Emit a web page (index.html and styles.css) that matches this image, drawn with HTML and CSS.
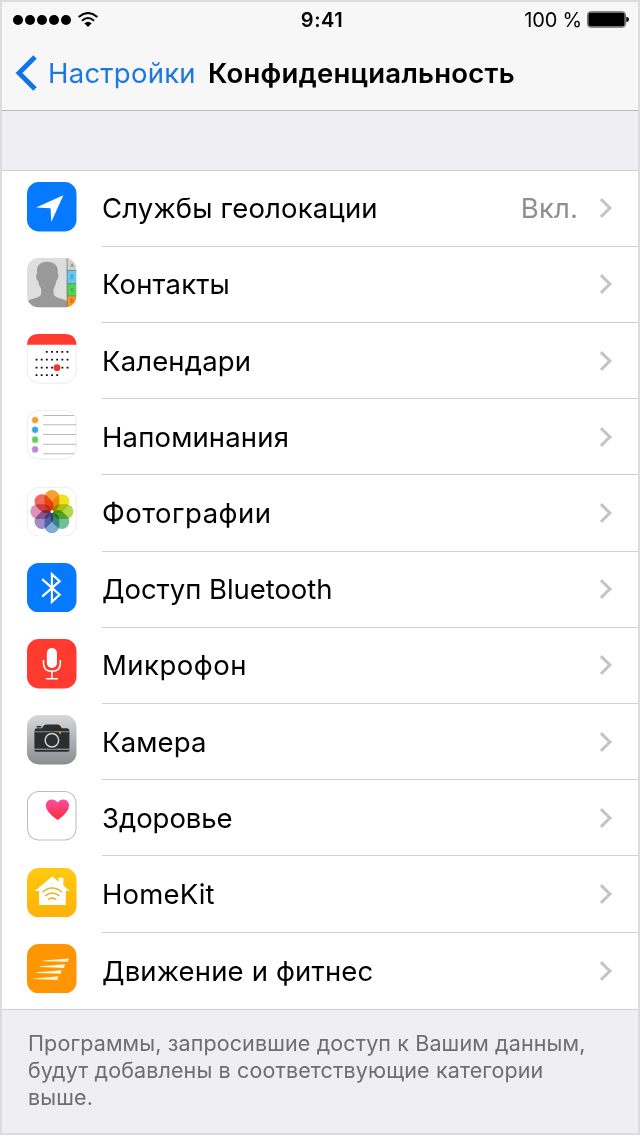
FILE: index.html
```html
<!DOCTYPE html>
<html lang="ru">
<head>
    <meta charset="UTF-8">
    <meta name="viewport" content="width=device-width, initial-scale=1.0">
    <title>Конфиденциальность</title>
    <link rel="stylesheet" href="styles.css">
</head>
<body>
    <div class="screen">
        <header class="header">
            <div class="status-bar">
                <div class="signal">
                    <i></i><i></i><i></i><i></i><i></i>
                    <svg class="wifi" viewBox="0 0 60 45">
                        <path d="M2 15Q30-9 58 15M12 26Q30 10 48 26" fill="none" stroke="#000" stroke-width="6"/>
                        <path d="M19 34Q30 25 41 34L30 45z"/>
                    </svg>
                </div>
                <div class="time">9:41</div>
                <div class="battery">
                    <span class="percent">100 %</span>
                    <svg viewBox="0 0 126 50">
                        <rect x="1.5" y="1.5" width="114" height="47" rx="9" fill="#fff" stroke="#555" stroke-width="2.5"/>
                        <rect x="4" y="4" width="109" height="42" rx="6"/>
                        <path d="M118 17q8 1 8 8t-8 8z"/>
                    </svg>
                </div>
            </div>
            <nav class="nav">
                <a class="back">
                    <svg viewBox="0 0 22 36"><path d="M20 2L4 18l16 16" fill="none" stroke="#0f74e8" stroke-width="4.8"/></svg>
                    <span>Настройки</span>
                </a>
                <h1>Конфиденциальность</h1>
            </nav>
        </header>

        <ul class="list">
            <li class="row">
                <svg class="icon" viewBox="0 0 147 147">
                    <rect width="147" height="147" rx="35" fill="#057aff"/>
                    <path d="M108 39L27 76l43 2 2 41z" fill="#fff"/>
                </svg>
                <div class="cell"><span>Службы геолокации</span><span class="value">Вкл.</span><i class="arrow"></i></div>
            </li>
            <li class="row">
                <svg class="icon" viewBox="0 0 147 147">
                    <defs><clipPath id="round"><rect width="147" height="147" rx="35"/></clipPath></defs>
                    <g clip-path="url(#round)">
                        <rect width="147" height="147" fill="#dedede"/>
                        <path d="M0 147v-18q4-5 18-8 22-5 24-13V91q-7-8-9-23-5-2-6-14 0-6 3-7Q25 12 60 11q35 1 31 36 3 1 2 8-1 11-6 13-2 15-8 23v17q2 8 23 13 13 3 17 8v18z" fill="#999"/>
                        <rect x="119" width="28" height="36" fill="#d3d1cc"/>
                        <rect x="119" y="37" width="28" height="39" fill="#63c8f5"/>
                        <rect x="119" y="77" width="28" height="36" fill="#51d44f"/>
                        <rect x="119" y="114" width="28" height="33" fill="#ff9212"/>
                        <path d="M119 0v147M119 37h28M119 76h28M119 113h28" stroke="#666" stroke-width="2"/>
                        <g fill="none" stroke="#555" stroke-opacity=".55" stroke-width="2.5">
                            <path d="M130 27l4-10 4 10m-6-3h5M131 51v10h4q4-3 0-5 3-3 0-5zM138 91q-7-3-7 3t7 3M131 122v10q7-1 7-5t-7-5"/>
                        </g>
                    </g>
                </svg>
                <div class="cell"><span>Контакты</span><i class="arrow"></i></div>
            </li>
            <li class="row">
                <svg class="icon" viewBox="0 0 147 147">
                    <rect x="1" y="1" width="145" height="145" rx="34" fill="#fff" stroke="#e2e2e2" stroke-width="2"/>
                    <path d="M0 32Q2 0 35 0h77q33 0 35 32z" fill="#ff3b30"/>
                    <g stroke="#111" stroke-width="5.5" stroke-dasharray="5.5 9.85">
                        <path d="M56 53h67M25.500 76h98M25.500 100h98M25.500 122h67"/>
                    </g>
                    <circle cx="89" cy="100" r="10" fill="#f0372d"/>
                </svg>
                <div class="cell"><span>Календари</span><i class="arrow"></i></div>
            </li>
            <li class="row">
                <svg class="icon" viewBox="0 0 147 147">
                    <rect x="1" y="1" width="145" height="145" rx="34" fill="#fff" stroke="#e2e2e2" stroke-width="2"/>
                    <path d="M48 16h92M48 44h98M48 73h98M48 102h98M48 130h92" stroke="#b9b9bb" stroke-width="3"/>
                    <g stroke-width="3" stroke-opacity=".6">
                        <circle cx="24" cy="30" r="9" fill="#f0a033" stroke="#f3b45c"/>
                        <circle cx="24" cy="59" r="9" fill="#38a3e3" stroke="#6dbfee"/>
                        <circle cx="24" cy="88" r="9" fill="#69cf58" stroke="#8adc7d"/>
                        <circle cx="24" cy="117" r="9" fill="#bf86d6" stroke="#d0a6e1"/>
                    </g>
                </svg>
                <div class="cell"><span>Напоминания</span><i class="arrow"></i></div>
            </li>
            <li class="row">
                <svg class="icon" viewBox="0 0 147 147">
                    <rect x="1" y="1" width="145" height="145" rx="34" fill="#fff" stroke="#e2e2e2" stroke-width="2"/>
                    <g class="petals" transform="translate(74 73)">
                        <rect x="-22" y="-64" width="44" height="62" rx="22" fill="#f9a033"/>
                        <rect x="-22" y="-64" width="44" height="62" rx="22" fill="#eee31c" transform="rotate(45)"/>
                        <rect x="-22" y="-64" width="44" height="62" rx="22" fill="#b8d64a" transform="rotate(90)"/>
                        <rect x="-22" y="-64" width="44" height="62" rx="22" fill="#70c196" transform="rotate(135)"/>
                        <rect x="-22" y="-64" width="44" height="62" rx="22" fill="#7fadd8" transform="rotate(180)"/>
                        <rect x="-22" y="-64" width="44" height="62" rx="22" fill="#9e8ec5" transform="rotate(225)"/>
                        <rect x="-22" y="-64" width="44" height="62" rx="22" fill="#d994b8" transform="rotate(270)"/>
                        <rect x="-22" y="-64" width="44" height="62" rx="22" fill="#f0695a" transform="rotate(315)"/>
                    </g>
                    <circle cx="74" cy="73" r="4" fill="#fff"/>
                </svg>
                <div class="cell"><span class="wide">Фотографии</span><i class="arrow"></i></div>
            </li>
            <li class="row">
                <svg class="icon" viewBox="0 0 147 147">
                    <rect width="147" height="147" rx="35" fill="#057aff"/>
                    <path d="M45 48l52 46-23 21V33l23 21-52 46" fill="none" stroke="#fff" stroke-width="6.5"/>
                </svg>
                <div class="cell"><span class="narrow">Доступ Bluetooth</span><i class="arrow"></i></div>
            </li>
            <li class="row">
                <svg class="icon" viewBox="0 0 147 147">
                    <rect width="147" height="147" rx="35" fill="#ff3b30"/>
                    <rect x="59" y="27" width="30" height="59" rx="15" fill="#fff"/>
                    <path d="M49 62v10q0 24 25 24t25-24V62M74 96v22M56 118h36" fill="none" stroke="#fff" stroke-width="4.500"/>
                </svg>
                <div class="cell"><span class="wide">Микрофон</span><i class="arrow"></i></div>
            </li>
            <li class="row">
                <svg class="icon" viewBox="0 0 147 147">
                    <defs>
                        <linearGradient id="steel" x2="0" y2="1"><stop stop-color="#d7d8da"/><stop offset="1" stop-color="#8b8c90"/></linearGradient>
                    </defs>
                    <rect width="147" height="147" rx="35" fill="url(#steel)"/>
                    <path d="M22 47q0-7 7-8h16q4-11 13-11h32q9 0 13 11h16q7 1 7 8v2H22z" fill="#2c2d2f"/>
                    <rect x="28" y="33" width="15" height="4" rx="2" fill="#2c2d2f"/>
                    <rect x="22" y="51" width="104" height="49" fill="#2c2d2f"/>
                    <path d="M22 103h104v2q0 4-5 4H27q-5 0-5-4z" fill="#2c2d2f"/>
                    <circle cx="74" cy="75" r="26" fill="#2c2d2f"/>
                    <circle cx="74" cy="75" r="20" fill="none" stroke="#d4d5d7" stroke-width="4.500"/>
                    <circle cx="98" cy="53" r="3" fill="#e9b23c"/>
                </svg>
                <div class="cell"><span>Камера</span><i class="arrow"></i></div>
            </li>
            <li class="row">
                <svg class="icon" viewBox="0 0 147 147">
                    <defs>
                        <linearGradient id="heart" x2="0" y2="1"><stop stop-color="#fb4fa0"/><stop offset="1" stop-color="#fb2a38"/></linearGradient>
                    </defs>
                    <rect x="1.500" y="1.500" width="144" height="144" rx="34" fill="#fff" stroke="#bcbcbf" stroke-width="3"/>
                    <path d="M91 86Q56 63 56 43c0-20 25-24 35-9 10-15 34-11 34 9q0 20-34 43z" fill="url(#heart)"/>
                </svg>
                <div class="cell"><span class="narrow">Здоровье</span><i class="arrow"></i></div>
            </li>
            <li class="row">
                <svg class="icon" viewBox="0 0 147 147">
                    <defs>
                        <linearGradient id="gold" x2="0" y2="1"><stop stop-color="#ffca10"/><stop offset="1" stop-color="#ffb107"/></linearGradient>
                    </defs>
                    <rect width="147" height="147" rx="35" fill="url(#gold)"/>
                    <path d="M75 25l19 16V29h14v23l19 16h-12v42H36V68H23z" fill="#fff"/>
                    <path d="M46 72q28-25 58 0M54 83q21-17 42 0M63 94q12-9 24 0" fill="none" stroke="#e9b12b" stroke-width="4.500"/>
                </svg>
                <div class="cell"><span>HomeKit</span><i class="arrow"></i></div>
            </li>
            <li class="row">
                <svg class="icon" viewBox="0 0 147 147">
                    <rect width="147" height="147" rx="35" fill="#ff9500"/>
                    <path d="M48 49l76-6-3 10-73-2zM38 66l75-6-3 11-72-3zM28 84l75-6-3 10-72-2zM18 103l75-7-3 11-72-3z" fill="#fff5dc"/>
                </svg>
                <div class="cell"><span>Движение и фитнес</span><i class="arrow"></i></div>
            </li>
        </ul>

        <p class="note">
            Программы, запросившие доступ к Вашим данным,<br>
            будут добавлены в соответствующие категории<br>
            выше.
        </p>
    </div>
</body>
</html>
```
FILE: styles.css
```css
* {
    box-sizing: border-box;
}
body {
    margin: 0;
    background: #fff;
    font-family: Inter, "Liberation Sans", sans-serif;
    color: #000;
}
.screen {
    width: 640px;
    height: 1135px;
    border: 2px solid #dcdcde;
    background: #eeeef3;
    overflow: hidden;
}
.header {
    height: 109px;
    background: #f7f7f7;
    border-bottom: 1px solid #b9b9bc;
}
.status-bar {
    display: grid;
    grid-template-columns: 1fr auto 1fr;
    align-items: center;
    height: 35px;
    padding: 0 9px 0 11px;
    font-size: 20px;
    line-height: 24px;
}
.signal {
    display: flex;
    align-items: center;
    gap: 2px;
}
.signal i {
    width: 10px;
    height: 10px;
    border-radius: 50%;
    background: #000;
}
.wifi {
    width: 20px;
    height: 15px;
    margin-left: 5px;
}
.time {
    margin-left: 2px;
    font-weight: 600;
    letter-spacing: 0.5px;
}
.battery {
    display: flex;
    justify-content: flex-end;
    align-items: center;
    gap: 5px;
}
.percent {
    letter-spacing: -0.2px;
}
.battery svg {
    width: 42px;
    height: 17px;
}
.nav {
    display: flex;
    align-items: center;
    height: 73px;
    padding: 0 0 1px 13px;
    font-size: 27.500px;
    letter-spacing: 0.250px;
    white-space: nowrap;
}
.back {
    display: flex;
    align-items: center;
    gap: 11px;
    width: 193px;
    color: #1c78e0;
}
.back svg {
    width: 22px;
    height: 36px;
}
h1 {
    margin: 0;
    font-size: 27.500px;
    font-weight: 600;
}
.list {
    margin: 59px 0 0;
    padding: 0;
    list-style: none;
    background: #fff;
    border-top: 1px solid #d0d0d4;
    border-bottom: 1px solid #cfcfd3;
}
.row {
    display: flex;
    height: 76.200px;
    padding-left: 25px;
}
.row:first-child {
    height: 75.900px;
}
.icon {
    width: 49.500px;
    height: 49.500px;
    margin: 11.200px 25.500px 0 0;
    flex: none;
}
.petals rect {
    mix-blend-mode: multiply;
}
.cell {
    flex: 1;
    display: flex;
    align-items: center;
    border-bottom: 1px solid #cfcfd2;
    padding: 0 29px 0 0;
    font-size: 27.500px;
    letter-spacing: 0.150px;
    white-space: nowrap;
}
.row:last-child .cell {
    border-bottom: 0;
}
.wide {
    letter-spacing: 0.500px;
}
.narrow {
    letter-spacing: -0.050px;
}
.value {
    margin-left: auto;
    color: #8e8e92;
}
.arrow {
    width: 14px;
    height: 14px;
    margin-left: auto;
    border: solid #c4c4c7;
    border-width: 3px 3px 0 0;
    transform: rotate(45deg);
}
.value + .arrow {
    margin-left: 17px;
}
.note {
    margin: 0;
    padding: 20px 26px;
    font-size: 21.500px;
    line-height: 27px;
    letter-spacing: 0.120px;
    color: #6d6d72;
    white-space: nowrap;
}
```
